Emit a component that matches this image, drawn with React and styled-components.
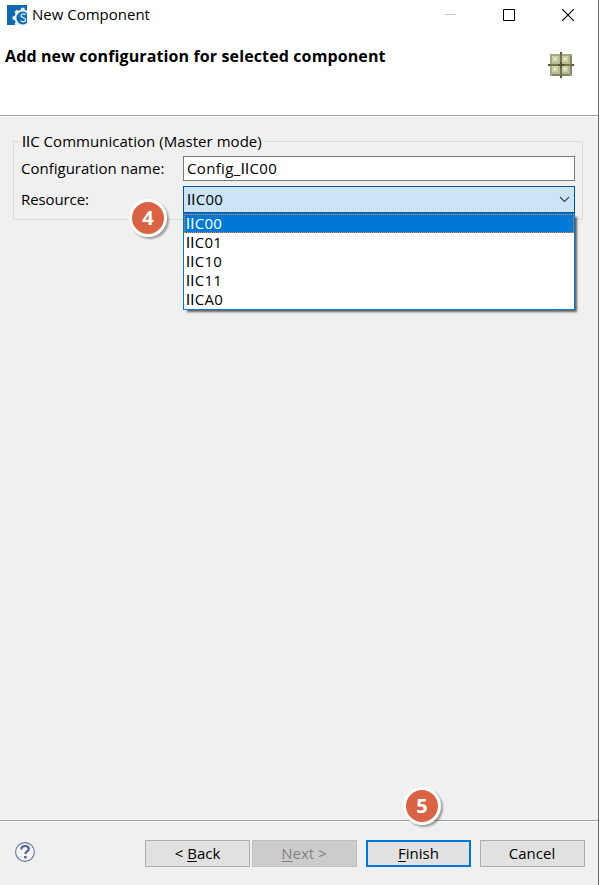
import React from "react";
import styled, { createGlobalStyle, css } from "styled-components";

const GlobalStyle = createGlobalStyle`
  * { box-sizing: border-box; }
  body { margin: 0; background: #f0f0f0; }
`;

const Dialog = styled.main`
  display: flex;
  flex-direction: column;
  width: 599px;
  height: 885px;
  overflow: hidden;
  background: #f0f0f0;
  border-right: 1px solid #696969;
  color: #000;
  font: 15px/20px "Open Sans", "Noto Sans", sans-serif;
  white-space: nowrap;
`;

const TitleBar = styled.header`
  display: flex;
  align-items: flex-start;
  height: 30px;
  padding: 5px 24px 0 7px;
  background: #fff;
`;

const Label = styled.span`
  letter-spacing: ${({ $track = 0 }) => $track}px;
`;

const FieldLabel = styled(Label)`
  padding-bottom: 2px;
`;

const PlainCapitals = styled.span`
  font-family: "Lato", sans-serif;
  font-size: 14.5px;
  line-height: 1;
`;

const WindowTitle = styled(Label)`
  margin: -1px 0 0 5px;
`;

const WindowControls = styled.div`
  display: flex;
  gap: 47px;
  margin: 4px 0 0 auto;
  svg { display: block; }
`;

const Banner = styled.section`
  display: flex;
  justify-content: space-between;
  height: 87px;
  padding: 16px 24px 0 5px;
  background: #fff;
  border-bottom: 1px solid #fff;
  box-shadow: inset 0 -1px #a0a0a0;
`;

const Heading = styled.h1`
  margin: 0;
  font-size: 16px;
  line-height: 20px;
  font-weight: 700;
  letter-spacing: 0.12px;
`;

const BannerIcon = styled.svg`
  margin-top: 6px;
`;

const Content = styled.section`
  flex: 1;
  padding: 14px 15px 0 13px;
`;

const Group = styled.fieldset`
  position: relative;
  display: flex;
  flex-direction: column;
  gap: 5px;
  width: 570px;
  height: 89px;
  margin: 0;
  padding: 5px 7px 0 7px;
  border: 1px solid #dcdcdc;
`;

const Legend = styled.legend`
  height: 20px;
  margin-left: -1px;
  padding: 0 2px 0 2px;
  line-height: 20px;
  letter-spacing: 0.03px;
`;

const FormRow = styled.div`
  display: grid;
  grid-template-columns: 162px 392px;
  align-items: center;
`;

const TextInput = styled.div`
  height: 25px;
  padding: 0 3px;
  line-height: 23px;
  background: #fff;
  border: 1px solid #7a7a7a;
`;

const ComboBox = styled.div`
  position: relative;
  display: flex;
  align-items: center;
  justify-content: space-between;
  height: 27px;
  padding: 0 4px 0 3px;
  background: #cce4f7;
  border: 1px solid #005499;
`;

const OptionList = styled.ul`
  position: absolute;
  z-index: 1;
  top: 26px;
  left: -1px;
  width: 392px;
  margin: 0;
  padding: 0;
  list-style: none;
  background: #fff;
  border: 1px solid #0078d7;
  box-shadow: 3px 3px 2px -1px rgba(0, 0, 0, 0.6);
`;

const Option = styled.li`
  height: 19px;
  padding-left: 2px;
  line-height: 19px;
  letter-spacing: 0.3px;
  ${({ $selected }) =>
    $selected &&
    css`
      padding-left: 1px;
      line-height: 17px;
      color: #fff;
      background: #0078d7;
      border: 1px dotted #ff8728;
    `}
`;

const StepBadge = styled.div`
  position: absolute;
  left: ${({ $x }) => $x}px;
  top: ${({ $y }) => $y}px;
  z-index: 2;
  width: 38px;
  height: 38px;
  border: 3px solid #fff;
  border-radius: 50%;
  background: #d96344;
  box-shadow: 2px 2px 2px rgba(0, 0, 0, 0.35);
  color: #fff;
  font: 700 20px/32px "Open Sans", sans-serif;
  text-align: center;
`;

const Footer = styled.footer`
  position: relative;
  display: flex;
  align-items: flex-start;
  height: 65px;
  padding: 18px 13px 0 14px;
  border-top: 1px solid #a0a0a0;
  box-shadow: inset 0 1px #fff;
`;

const HelpIcon = styled.svg`
  margin-top: 2px;
`;

const Actions = styled.div`
  display: flex;
  gap: 9px;
  margin: 1px 0 0 auto;
`;

const StepButtons = styled.div`
  display: flex;
  gap: 2px;
`;

const Button = styled.button`
  width: 105px;
  height: 27px;
  padding: 0 0 1px;
  border: 1px solid #adadad;
  background: #e1e1e1;
  color: #000;
  font: inherit;
  &:disabled {
    padding-right: 1px;
    color: #838383;
    background: #ccc;
    border-color: #bfbfbf;
  }
  ${({ $primary }) => $primary && css`border: 2px solid #0078d7;`}
`;

const CancelButton = styled(Button)`
  padding-right: 1px;
`;

const Mnemonic = styled.span`
  text-decoration: underline;
  text-decoration-thickness: 1px;
  text-underline-offset: 2px;
`;

const options = ["00", "01", "10", "11", "A0"];
const quadrants = [[1, 1], [6, 1], [1, 6], [6, 6]];
const teeth = [0, 45, 90, 135, 180, 225, 270, 315];

function IIC() {
  return <><PlainCapitals>II</PlainCapitals>C</>;
}

function AppIcon() {
  return (
    <svg width="20" height="20" viewBox="0 0 20 20">
      <defs><clipPath id="tile"><path d="M0 0h20v20H0z" /></clipPath></defs>
      <path fill="#1169b4" d="M0 0h20v20H0z" />
      <g clipPath="url(#tile)">
        <circle cx="15.8" cy="13" r="7.4" fill="none" stroke="#e8f1f8" strokeWidth="2" />
        {teeth.map((a) => (
          <path key={a} d="M14.2 2.8h3.2l.6 3h-4.4z" fill="#e8f1f8" transform={`rotate(${a} 15.8 13)`} />
        ))}
        <path d="M18.7 9.7c-1.3-1.1-4.7-1.1-4.8 1.1-.1 2.2 4.9 1.5 4.8 4.1-.1 2.3-3.6 2.3-5.2.9" fill="none" stroke="#c9deef" strokeWidth="1.4" />
      </g>
    </svg>
  );
}

function ComponentIcon() {
  return (
    <BannerIcon width="26" height="26" viewBox="0 0 13 13" shapeRendering="crispEdges">
      <path fill="#a5a580" d="M1 1h11v11H1z" />
      <path fill="#858565" d="M11 2h1v9h-1zM2 11h9v1H2z" />
      {quadrants.map(([x, y]) => (
        <g key={`${x}-${y}`} transform={`translate(${x} ${y})`}>
          <path fill="#b9b993" d="M1 1h4v4H1z" />
          <path fill="#ceceac" d="M1 1h3v3H1z" />
          <path fill="#f5f5cc" d="M2 2h1v1H2z" />
        </g>
      ))}
      <path fill="#737350" d="M6 1h1v11H6zM1 6h11v1H1z" />
      <path fill="#555536" d="M6 0h1v1H6zM6 12h1v1H6zM0 6h1v1H0zM12 6h1v1h-1zM5 6h3v1H5zM6 5h1v3H6z" />
    </BannerIcon>
  );
}

export default function App() {
  return (
    <>
      <GlobalStyle />
      <Dialog>
        <TitleBar>
          <AppIcon />
          <WindowTitle>New Component</WindowTitle>
          <WindowControls>
            <svg width="12" height="12"><path d="M0 5.5h12" stroke="#ccc" transform="translate(1 0)" /></svg>
            <svg width="12" height="12"><path d="M.5.5h11v11H.5z" fill="none" stroke="#000" /></svg>
            <svg width="12" height="12"><path d="M0 0l12 12M12 0L0 12" stroke="#000" strokeWidth="1.1" /></svg>
          </WindowControls>
        </TitleBar>
        <Banner>
          <Heading>Add new configuration for selected component</Heading>
          <ComponentIcon />
        </Banner>
        <Content>
          <Group>
            <Legend><IIC /> Communication (Master mode)</Legend>
            <FormRow>
              <FieldLabel>Configuration name:</FieldLabel>
              <TextInput><Label $track={0.35}>Config_<IIC />00</Label></TextInput>
            </FormRow>
            <FormRow>
              <FieldLabel $track={-0.1}>Resource:</FieldLabel>
              <ComboBox>
                <FieldLabel $track={0.3}><IIC />00</FieldLabel>
                <svg width="11" height="7"><path d="M1 1l4.5 4.5L10 1" fill="none" stroke="#404040" strokeWidth="1.1" /></svg>
                <OptionList>
                  {options.map((suffix, i) => (
                    <Option key={suffix} $selected={i === 0}><IIC />{suffix}</Option>
                  ))}
                </OptionList>
              </ComboBox>
            </FormRow>
            <StepBadge $x={115} $y={48}>4</StepBadge>
          </Group>
        </Content>
        <Footer>
          <HelpIcon width="22" height="22" viewBox="0 0 22 22">
            <circle cx="11" cy="11" r="9.4" fill="#f3f3f5" stroke="#65789b" strokeWidth="1.1" />
            <path d="M7.4 8.5V7.7C7.6 5.7 9 5 11 5c2.3 0 3.8 1.1 3.8 2.9 0 2.5-3.4 2.5-3.4 5" fill="none" stroke="#526589" strokeWidth="2.2" />
            <path fill="#526589" d="M10.1 15h2.5v2.4h-2.5z" />
          </HelpIcon>
          <Actions>
            <StepButtons>
              <Button>&lt; <Mnemonic>B</Mnemonic>ack</Button>
              <Button disabled><Mnemonic>N</Mnemonic>ext &gt;</Button>
            </StepButtons>
            <Button $primary><Mnemonic>F</Mnemonic>inish</Button>
            <CancelButton>Cancel</CancelButton>
          </Actions>
          <StepBadge $x={403} $y={-34}>5</StepBadge>
        </Footer>
      </Dialog>
    </>
  );
}
